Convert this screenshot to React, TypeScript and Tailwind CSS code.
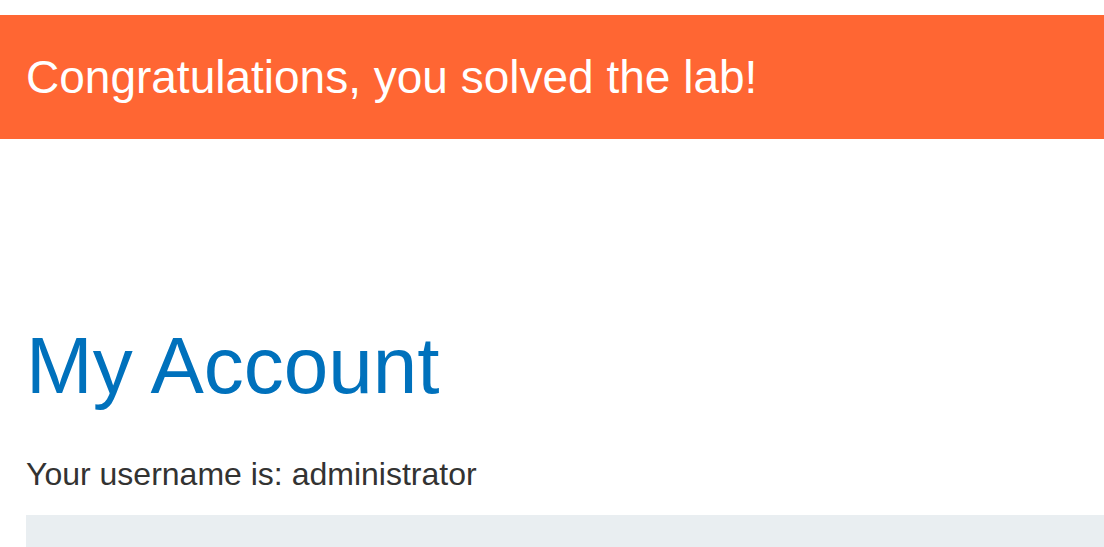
export default function App() {
  return (
    <div className="min-h-screen bg-white pt-[15px] font-['Liberation_Sans',Arial,sans-serif]">
      {/* banner de lab resolvido */}
      <div className="flex h-[124px] items-center bg-[#ff6633] px-[26px]">
        <h4 className="text-[46px] leading-none text-white">Congratulations, you solved the lab!</h4>
      </div>
      <div className="pl-[26px]">
        <h1 className="mt-[187px] text-[80px] leading-none text-[#0071bc]">My Account</h1>
        <p className="mt-[52px] text-[32px] leading-none text-[#333332]">Your username is: administrator</p>
        <div className="mt-[25px] h-[40px] bg-[#e9eef1]" />
      </div>
    </div>
  );
}
